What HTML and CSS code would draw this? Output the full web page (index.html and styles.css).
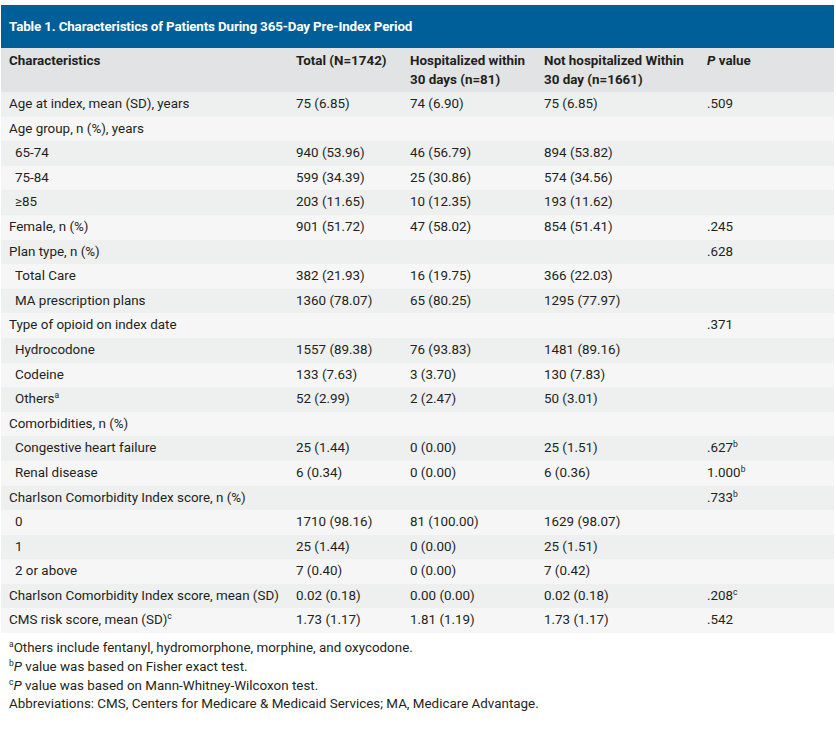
FILE: index.html
```html
<!DOCTYPE html>
<html lang="en">
<head>
    <meta charset="UTF-8">
    <meta name="viewport" content="width=device-width, initial-scale=1.0">
    <title>Table 1</title>
    <link rel="stylesheet" href="styles.css">
</head>
<body>
  <div class="wrap">
    <div class="title">Table 1. Characteristics of Patients During 365-Day Pre-Index Period</div>
    <table class="data">
      <colgroup>
        <col class="c1"><col class="c2"><col class="c3"><col class="c4"><col class="c5">
      </colgroup>
      <thead>
        <tr>
          <th>Characteristics</th>
          <th>Total (N=1742)</th>
          <th>Hospitalized within 30 days (n=81)</th>
          <th>Not hospitalized Within 30 day (n=1661)</th>
          <th><i>P</i> value</th>
        </tr>
      </thead>
      <tbody>
        <tr><td>Age at index, mean (SD), years</td><td>75 (6.85)</td><td>74 (6.90)</td><td>75 (6.85)</td><td>.509</td></tr>
        <tr><td>Age group, n (%), years</td><td></td><td></td><td></td><td></td></tr>
        <tr><td class="sub">65-74</td><td>940 (53.96)</td><td>46 (56.79)</td><td>894 (53.82)</td><td></td></tr>
        <tr><td class="sub">75-84</td><td>599 (34.39)</td><td>25 (30.86)</td><td>574 (34.56)</td><td></td></tr>
        <tr><td class="sub">≥85</td><td>203 (11.65)</td><td>10 (12.35)</td><td>193 (11.62)</td><td></td></tr>
        <tr><td>Female, n (%)</td><td>901 (51.72)</td><td>47 (58.02)</td><td>854 (51.41)</td><td>.245</td></tr>
        <tr><td>Plan type, n (%)</td><td></td><td></td><td></td><td>.628</td></tr>
        <tr><td class="sub">Total Care</td><td>382 (21.93)</td><td>16 (19.75)</td><td>366 (22.03)</td><td></td></tr>
        <tr><td class="sub">MA prescription plans</td><td>1360 (78.07)</td><td>65 (80.25)</td><td>1295 (77.97)</td><td></td></tr>
        <tr><td>Type of opioid on index date</td><td></td><td></td><td></td><td>.371</td></tr>
        <tr><td class="sub">Hydrocodone</td><td>1557 (89.38)</td><td>76 (93.83)</td><td>1481 (89.16)</td><td></td></tr>
        <tr><td class="sub">Codeine</td><td>133 (7.63)</td><td>3 (3.70)</td><td>130 (7.83)</td><td></td></tr>
        <tr><td class="sub">Others<sup>a</sup></td><td>52 (2.99)</td><td>2 (2.47)</td><td>50 (3.01)</td><td></td></tr>
        <tr><td>Comorbidities, n (%)</td><td></td><td></td><td></td><td></td></tr>
        <tr><td class="sub">Congestive heart failure</td><td>25 (1.44)</td><td>0 (0.00)</td><td>25 (1.51)</td><td>.627<sup>b</sup></td></tr>
        <tr><td class="sub">Renal disease</td><td>6 (0.34)</td><td>0 (0.00)</td><td>6 (0.36)</td><td>1.000<sup>b</sup></td></tr>
        <tr><td>Charlson Comorbidity Index score, n (%)</td><td></td><td></td><td></td><td>.733<sup>b</sup></td></tr>
        <tr><td class="sub">0</td><td>1710 (98.16)</td><td>81 (100.00)</td><td>1629 (98.07)</td><td></td></tr>
        <tr><td class="sub">1</td><td>25 (1.44)</td><td>0 (0.00)</td><td>25 (1.51)</td><td></td></tr>
        <tr><td class="sub">2 or above</td><td>7 (0.40)</td><td>0 (0.00)</td><td>7 (0.42)</td><td></td></tr>
        <tr><td>Charlson Comorbidity Index score, mean (SD)</td><td>0.02 (0.18)</td><td>0.00 (0.00)</td><td>0.02 (0.18)</td><td>.208<sup>c</sup></td></tr>
        <tr><td>CMS risk score, mean (SD)<sup>c</sup></td><td>1.73 (1.17)</td><td>1.81 (1.19)</td><td>1.73 (1.17)</td><td>.542</td></tr>
      </tbody>
    </table>
    <div class="notes">
      <p><sup>a</sup>Others include fentanyl, hydromorphone, morphine, and oxycodone.</p>
      <p><sup>b</sup><i>P</i> value was based on Fisher exact test.</p>
      <p><sup>c</sup><i>P</i> value was based on Mann-Whitney-Wilcoxon test.</p>
      <p>Abbreviations: CMS, Centers for Medicare &amp; Medicaid Services; MA, Medicare Advantage.</p>
    </div>
  </div>
</body>
</html>
```

FILE: styles.css
```css
body {
margin: 0;
background: #fff;
font-family: Roboto, 'Liberation Sans', sans-serif;
font-size: 13.4px;
color: #231f20;
}

.wrap {
width: 833px;
margin-top: 5px;
margin-left: 1px;
}

.title {
background-color: #005e98;
color: #fff;
font-weight: 700;
height: 43px;
line-height: 43px;
padding-left: 8px;
letter-spacing: -0.15px;
}

.data {
width: 100%;
border-collapse: collapse;
table-layout: fixed;
}

.c1 { width: 287px; }
.c2 { width: 114px; }
.c3 { width: 134px; }
.c4 { width: 163px; }
.c5 { width: 135px; }

.data th {
background-color: #e2e3e4;
text-align: left;
vertical-align: top;
font-weight: 700;
line-height: 19px;
padding: 3px 8px 3px 8px;
}

.data td {
padding: 4px 8px;
line-height: 16.6px;
vertical-align: middle;
white-space: nowrap;
}

.data tbody tr:nth-child(odd) {
background-color: #eeefef;
}

.data tbody tr:nth-child(even) {
background-color: #f6f6f6;
}

.data td.sub {
padding-left: 14px;
}

sup {
font-size: 8.5px;
line-height: 0;
vertical-align: 5px;
}

.notes {
padding: 6px 8px 4px 8px;
}

.notes p {
margin: 0;
line-height: 18.8px;
}
```
